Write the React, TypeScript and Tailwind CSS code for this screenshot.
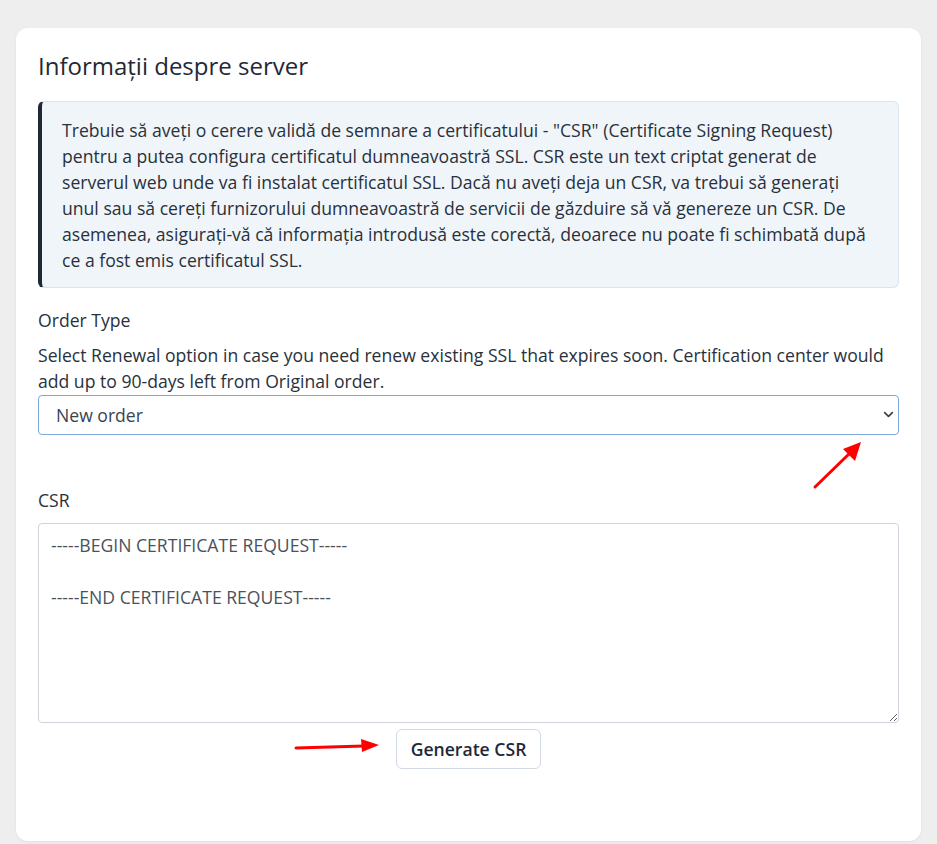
import React from "react";

export default function App() {
  return (
    <div
      className="relative min-h-[844px] w-full bg-[#eeeeee] pt-[28px] px-[16px] pb-[2px]"
      style={{ fontFamily: '"Open Sans", "Noto Sans", sans-serif' }}
    >
      <div className="rounded-[12px] bg-white px-[22px] pt-[23px] pb-[72px] shadow-[0_1px_3px_rgba(0,0,0,0.06)]">
        <h2 className="text-[24px] leading-[29px] font-normal text-[#1f2937]">
          Informații despre server
        </h2>

        <div className="mt-[21px] rounded-[6px] border border-[#dbe3ec] border-l-[4px] border-l-[#1f2933] bg-[#f0f5fa] pl-[20px] pr-[20px] pt-[15px] pb-[14px] text-[17.6px] leading-[26px] text-[#28313b]">
          Trebuie să aveți o cerere validă de semnare a certificatului - "CSR" (Certificate Signing Request)
          pentru a putea configura certificatul dumneavoastră SSL. CSR este un text criptat generat de
          serverul web unde va fi instalat certificatul SSL. Dacă nu aveți deja un CSR, va trebui să generați
          unul sau să cereți furnizorului dumneavoastră de servicii de găzduire să vă genereze un CSR. De
          asemenea, asigurați-vă că informația introdusă este corectă, deoarece nu poate fi schimbată după
          ce a fost emis certificatul SSL.
        </div>

        <div className="mt-[19px] text-[17.6px] leading-[26px] text-[#28313b]">Order Type</div>
        <p className="mt-[9px] text-[17.6px] leading-[26px] text-[#28313b]">
          Select Renewal option in case you need renew existing SSL that expires soon. Certification center would
          add up to 90-days left from Original order.
        </p>
        <div className="relative mt-[1px]">
          <select
            defaultValue="new"
            className="block h-[40px] w-full appearance-none rounded-[4px] border border-[#7ea8d8] bg-white pl-[17px] pr-[36px] text-[17.6px] text-[#3a4350] outline-none"
            style={{ fontFamily: '"Open Sans", "Noto Sans", sans-serif' }}
          >
            <option value="new">New order</option>
            <option value="renew">Renewal</option>
          </select>
          <svg
            className="pointer-events-none absolute right-[5px] top-[15px]"
            width="11"
            height="9"
            viewBox="0 0 16 14"
            fill="none"
            stroke="#3b424a"
            strokeWidth="2.6"
            strokeLinecap="round"
            strokeLinejoin="round"
          >
            <path d="M2 4l6 6 6-6" />
          </svg>
        </div>

        <div className="mt-[52px] text-[17.6px] leading-[26px] text-[#28313b]">CSR</div>
        <textarea
          className="mt-[10px] block h-[200px] w-full rounded-[4px] border border-[#cfd4db] bg-white px-[12px] pt-[8px] text-[17.6px] leading-[26px] text-[#4a525c] outline-none"
          style={{ fontFamily: '"Open Sans", "Noto Sans", sans-serif' }}
          defaultValue={"-----BEGIN CERTIFICATE REQUEST-----\n\n-----END CERTIFICATE REQUEST-----"}
        />
        <div className="mt-[6px] flex justify-center">
          <button className="h-[40px] rounded-[6px] border border-[#d3d9e0] bg-white px-[14px] text-[17.6px] font-semibold text-[#1f2937]">
            Generate CSR
          </button>
        </div>
      </div>

      <svg
        className="pointer-events-none absolute left-0 top-0"
        width="937"
        height="844"
        viewBox="0 0 937 844"
      >
        <line x1="815" y1="487" x2="850" y2="453" stroke="#ff0000" strokeWidth="3" strokeLinecap="round" />
        <polygon points="861,442 843,449 855,461" fill="#ff0000" />
        <line x1="296" y1="748" x2="364" y2="746" stroke="#ff0000" strokeWidth="3" strokeLinecap="round" />
        <polygon points="379,745 361,739 362,752" fill="#ff0000" />
      </svg>
    </div>
  );
}
